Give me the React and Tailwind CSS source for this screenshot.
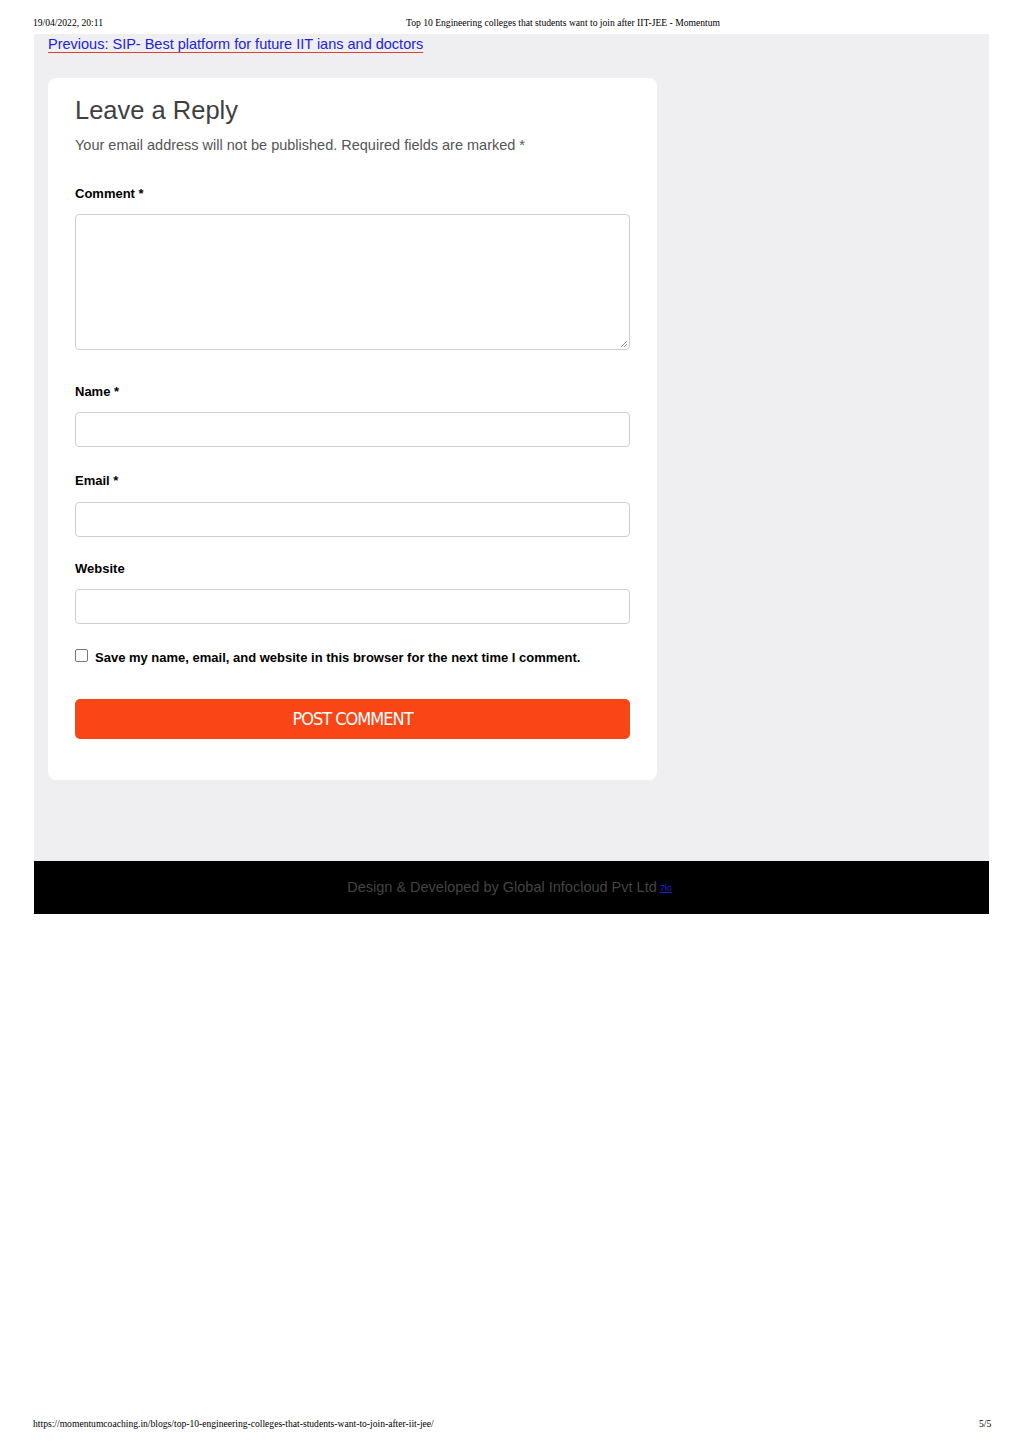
export default function App() {
  const label = "block text-[13px] font-bold text-black";
  const input = "block w-[555px] h-[35px] rounded-[4px] border border-[#cfcfcf] bg-white";
  return (
    <div className="w-[1024px] h-[1448px] bg-white relative" style={{ fontFamily: '"Liberation Sans", Arial, sans-serif' }}>
      <div className="h-[34px] flex items-start text-[9.6px] leading-[12px] text-black pl-[33px] pt-[17px]" style={{ fontFamily: '"Liberation Serif", serif' }}>
        <span className="w-[373px]">19/04/2022, 20:11</span>
        <span>Top 10 Engineering colleges that students want to join after IIT-JEE - Momentum</span>
      </div>
      <div className="ml-[34px] w-[955px] bg-[#efeff1] pt-[1px] px-[14px] h-[827px] leading-[18px]">
        <a href="#" className="block w-fit text-[14.5px] leading-[18px] underline decoration-[#e0412c] underline-offset-[3px]" style={{ color: "#2222dd" }}>
          Previous: SIP- Best platform for future IIT ians and doctors
        </a>
        <div className="mt-[25px] w-[609px] bg-white rounded-[8px] px-[27px] pt-[16px] pb-[41px]">
          <h3 className="text-[25.5px] leading-[32px] text-[#3f3f3f]">Leave a Reply</h3>
          <p className="mt-[10px] text-[14.5px] leading-[18px] text-[#555]">Your email address will not be published. Required fields are marked *</p>
          <label className={label + " mt-[32px] leading-[16px]"}>Comment *</label>
          <div className="mt-[12px] w-[555px] h-[136px] rounded-[4px] border border-[#cfcfcf] relative">
            <svg className="absolute right-[1px] bottom-[1px]" width="8" height="8" viewBox="0 0 8 8"><path d="M7 1 L1 7 M7 4 L4 7" stroke="#999" strokeWidth="1" /></svg>
          </div>
          <label className={label + " mt-[34px] leading-[16px]"}>Name *</label>
          <div className={input + " mt-[12px]"}></div>
          <label className={label + " mt-[26px] leading-[16px]"}>Email *</label>
          <div className={input + " mt-[13px]"}></div>
          <label className={label + " mt-[24px] leading-[16px]"}>Website</label>
          <div className={input + " mt-[12px]"}></div>
          <div className="mt-[24px] flex items-start gap-[7px]">
            <span className="mt-[1px] w-[13px] h-[13px] border border-[#777] rounded-[2px] bg-white"></span>
            <span className="text-[13px] font-bold text-black leading-[18px] mt-[1px]">Save my name, email, and website in this browser for the next time I comment.</span>
          </div>
          <button className="mt-[32px] w-[555px] h-[40px] rounded-[5px] bg-[#fa4616] text-white text-[18px] tracking-[-1px] flex items-center justify-center" style={{ fontFamily: '"DejaVu Sans Condensed", "DejaVu Sans", sans-serif', fontWeight: 200 }}>
            POST COMMENT
          </button>
        </div>
      </div>
      <div className="ml-[34px] w-[955px] h-[53px] bg-black flex items-center justify-center">
        <span className="text-[14.5px] text-[#444] ml-[-4px]">Design &amp; Developed by Global Infocloud Pvt Ltd</span>
        <a href="#" className="text-[9px] text-[#2222dd] underline ml-[3px] mt-[2px]">7lo</a>
      </div>
      <div className="absolute left-[33px] top-[1417px] text-[9.6px] text-black" style={{ fontFamily: '"Liberation Serif", serif' }}>
        https://momentumcoaching.in/blogs/top-10-engineering-colleges-that-students-want-to-join-after-iit-jee/
      </div>
      <div className="absolute left-[979px] top-[1417px] text-[9.6px] text-black" style={{ fontFamily: '"Liberation Serif", serif' }}>5/5</div>
    </div>
  );
}
